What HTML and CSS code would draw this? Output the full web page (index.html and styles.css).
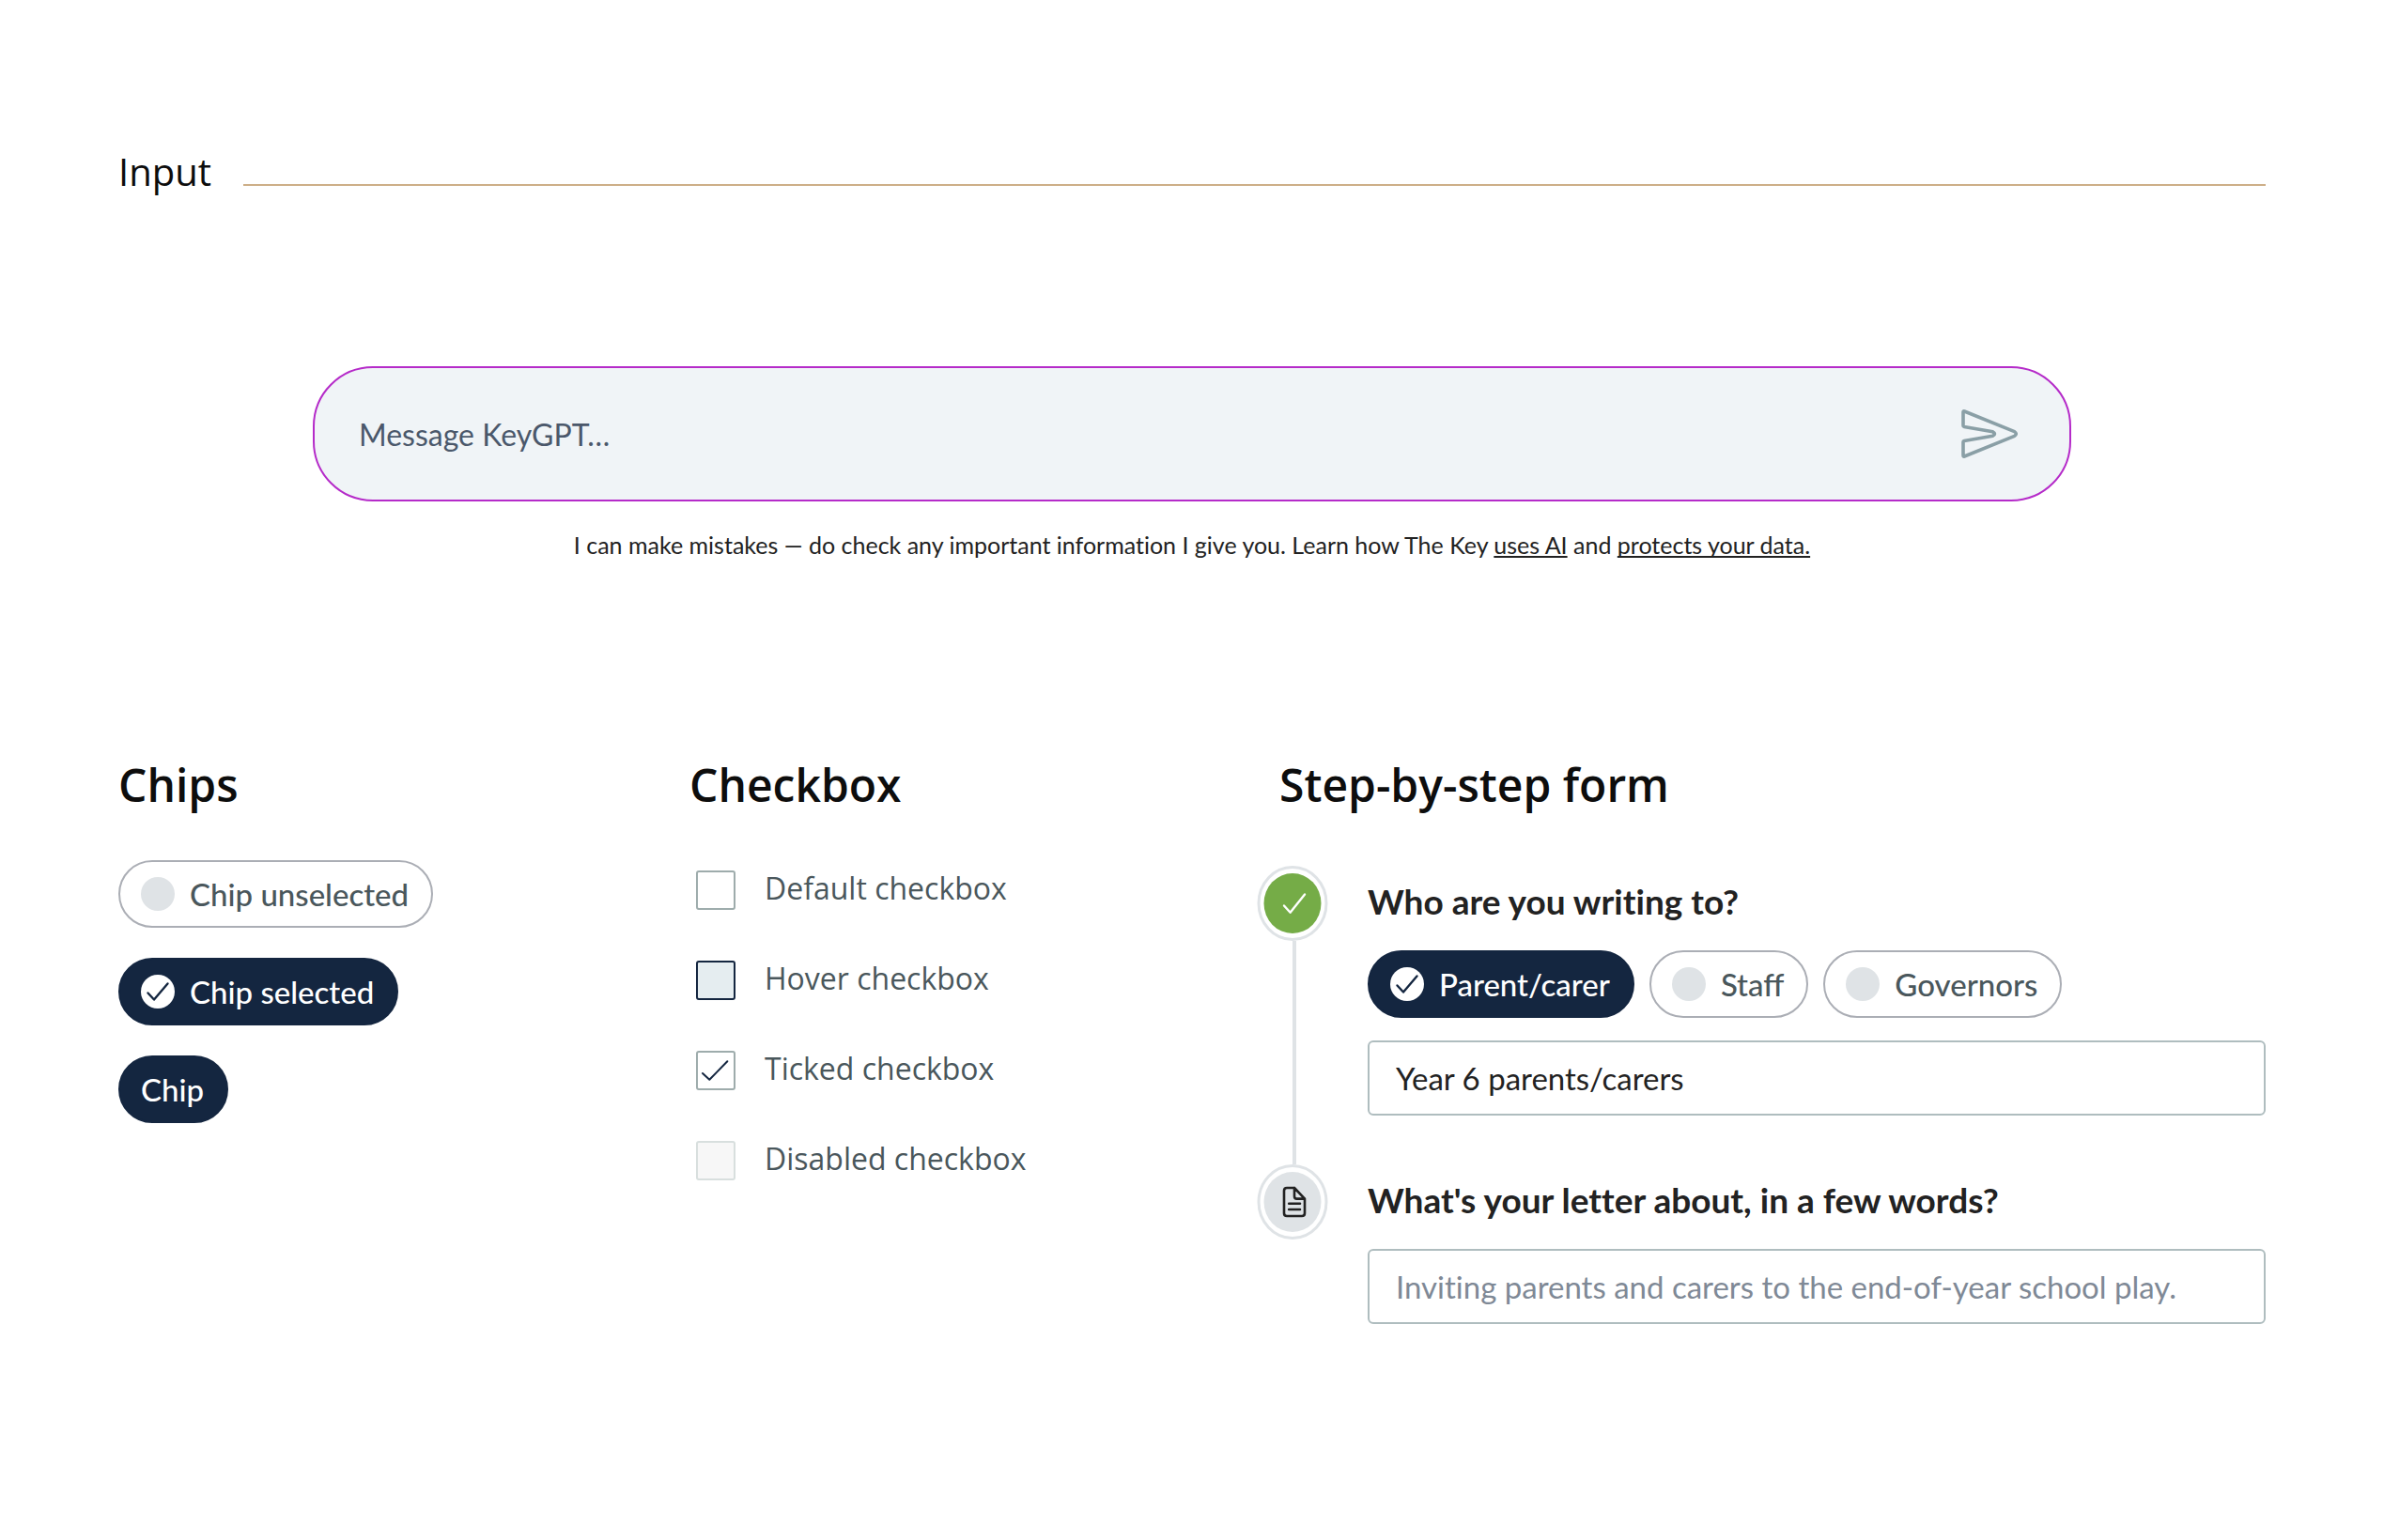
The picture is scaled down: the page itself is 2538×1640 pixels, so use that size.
FILE: index.html
```
<!DOCTYPE html>
<html lang="en">
<head>
  <meta charset="UTF-8" />
  <title>Input</title>
  <link rel="stylesheet" href="styles.css">
</head>
<body>
  <header class="section-header">
    <h1>Input</h1>
    <hr class="rule">
  </header>

  <form class="composer">
    <input type="text" class="composer-input" placeholder="Message KeyGPT…" aria-label="Message KeyGPT" />
    <button type="button" class="send-btn" aria-label="Send">
      <svg width="60" height="52" viewBox="0 0 60 52" fill="none" stroke="currentColor" stroke-width="3.6" stroke-linejoin="round">
        <path d="M2 2.9Q2 1.6 3.3 2L56.6 23.6Q60 26 56.6 28.4L3.3 50Q2 50.4 2 49.1V34.8Q2 33.7 3 33.5L33.5 28.2Q37.5 26 33.5 23.8L3 18.5Q2 18.3 2 17.2Z"/>
      </svg>
    </button>
  </form>
  <p class="note">I can make mistakes — do check any important information I give you. Learn how The Key <a href="#">uses AI</a> and <a href="#">protects your data.</a></p>

  <main class="columns">
    <section>
      <h2>Chips</h2>
      <div class="chip-list">
        <button type="button" class="chip" aria-pressed="false"><span class="dot"></span>Chip unselected</button>
        <button type="button" class="chip selected" aria-pressed="true">
          <svg class="dot" viewBox="0 0 36 36"><path d="M7.5 19.5L14 26.5L28.5 9.5"/></svg>Chip selected
        </button>
        <button type="button" class="chip selected">Chip</button>
      </div>
    </section>

    <section>
      <h2>Checkbox</h2>
      <div class="check-list">
        <label class="check"><input type="checkbox" />Default checkbox</label>
        <label class="check hover"><input type="checkbox" />Hover checkbox</label>
        <label class="check"><input type="checkbox" checked />Ticked checkbox
          <svg class="tick" width="42" height="42" viewBox="0 0 42 42"><path d="M7 24L14.3 30.8L33.3 11.2"/></svg>
        </label>
        <label class="check"><input type="checkbox" disabled />Disabled checkbox</label>
      </div>
    </section>

    <section>
      <h2 class="form-heading">Step-by-step form</h2>
      <form class="steps">
        <div class="step">
          <div class="marker">
            <svg width="76" height="80" viewBox="0 0 76 80" fill="none">
              <ellipse cx="38" cy="40" rx="36" ry="38.5" stroke="#dfe3e6" stroke-width="3"/>
              <ellipse cx="38" cy="40" rx="30.5" ry="32" fill="#75ac47"/>
              <path d="M29 42.5L35.6 49.8L51 30.5" stroke="#fff" stroke-width="2.4" stroke-linecap="round" stroke-linejoin="round"/>
            </svg>
          </div>
          <div class="step-body">
            <label class="question" for="audience">Who are you writing to?</label>
            <div class="chip-row">
              <button type="button" class="chip selected" aria-pressed="true">
                <svg class="dot" viewBox="0 0 36 36"><path d="M7.5 19.5L14 26.5L28.5 9.5"/></svg>Parent/carer
              </button>
              <button type="button" class="chip" aria-pressed="false"><span class="dot"></span>Staff</button>
              <button type="button" class="chip" aria-pressed="false"><span class="dot"></span>Governors</button>
            </div>
            <input type="text" id="audience" class="field" value="Year 6 parents/carers" />
          </div>
        </div>

        <div class="step">
          <div class="marker">
            <svg width="76" height="80" viewBox="0 0 76 80" fill="none">
              <ellipse cx="38" cy="40" rx="36" ry="38.5" stroke="#dfe3e6" stroke-width="3"/>
              <ellipse cx="38" cy="40" rx="30.5" ry="32" fill="#dfe3e6"/>
              <path d="M40 25H32Q29 25 29 28V52Q29 55 32 55H48Q51 55 51 52V36.6L40 25V34Q40 36.6 42.5 36.6H51M34.2 41.8H46M34.2 48H46" stroke="#222" stroke-width="2.6" stroke-linecap="round" stroke-linejoin="round"/>
            </svg>
          </div>
          <div class="step-body">
            <label class="question" for="topic">What's your letter about, in a few words?</label>
            <input type="text" id="topic" class="field" placeholder="Inviting parents and carers to the end-of-year school play." />
          </div>
        </div>
      </form>
    </section>
  </main>
</body>
</html>
```
FILE: styles.css
```
* {
  box-sizing: border-box;
}

body {
  margin: 0;
  padding: 155px 126px;
  font-family: Lato, sans-serif;
  font-size: 33px;
  font-variant-ligatures: none;
  background: #fff;
  color: #222;
}

h1, h2 {
  margin: 0;
  font-family: "Open Sans", sans-serif;
  color: #0d0d0d;
}

h1 {
  font-size: 40px;
  font-weight: 400;
  line-height: 56px;
}

h2 {
  font-size: 48px;
  font-weight: 600;
  line-height: 64px;
}

.section-header {
  display: flex;
  align-items: flex-end;
  gap: 34px;
}

.rule {
  flex: 1;
  height: 2px;
  margin: 0 0 13px;
  border: none;
  background: #cdae88;
}

/* Message box */
.composer {
  display: flex;
  align-items: center;
  max-width: 1872px;
  height: 144px;
  margin: 179px auto 0;
  padding: 0 55px 0 47px;
  border: 2px solid #b52bc9;
  border-radius: 64px;
  background: #f0f4f7;
}

.composer-input {
  flex: 1;
  min-width: 0;
  padding: 0;
  border: none;
  outline: none;
  background: transparent;
  font: 400 32px Lato, sans-serif;
  color: #222;
}

.composer-input::placeholder {
  color: #4b586b;
  opacity: 1;
}

.send-btn {
  display: flex;
  padding: 0;
  border: none;
  background: transparent;
  color: #8a9fa6;
  cursor: pointer;
}

.note {
  margin: 28px 0 0;
  text-align: center;
  font-size: 25px;
  line-height: 36px;
}

.note a {
  color: inherit;
  text-decoration-thickness: 2px;
  text-underline-offset: 2px;
  text-decoration-skip-ink: none;
}

.columns {
  display: grid;
  grid-template-columns: 608px 604px 1fr;
  margin-top: 206px;
}

/* Chips */
.chip-list {
  display: flex;
  flex-direction: column;
  align-items: flex-start;
  gap: 32px;
  margin-top: 48px;
}

.chip-row {
  display: flex;
  flex-wrap: wrap;
  gap: 16px;
  margin-bottom: 24px;
}

.chip {
  display: flex;
  align-items: center;
  gap: 16px;
  height: 72px;
  padding: 0 24px 0 22px;
  border: 2px solid #abaeb5;
  border-radius: 36px;
  background: #fff;
  font: 500 33px Lato, sans-serif;
  color: #4a575c;
  cursor: pointer;
}

.chip.selected {
  border-color: #142640;
  background: #142640;
  color: #fff;
}

.dot {
  width: 36px;
  height: 36px;
  border-radius: 50%;
  background: #dfe3e6;
}

.selected .dot {
  background: #fff;
  fill: none;
  stroke: #142640;
  stroke-width: 2.4;
  stroke-linecap: round;
  stroke-linejoin: round;
}

/* Checkboxes */
.check-list {
  display: flex;
  flex-direction: column;
  gap: 54px;
  margin-top: 59px;
  padding-left: 7px;
}

.check {
  position: relative;
  display: flex;
  align-items: flex-start;
  gap: 31px;
  height: 42px;
  font-family: "Open Sans", sans-serif;
  font-size: 32px;
  line-height: 38px;
  color: #4a575c;
}

.check input {
  appearance: none;
  width: 42px;
  height: 42px;
  margin: 0;
  border: 2px solid #9eacac;
  border-radius: 3px;
  background: #fff;
}

.check.hover input {
  border-color: #142640;
  background: #e5edf0;
}

.check input:disabled {
  border-color: #d8dfde;
  background: #f7f7f7;
}

.tick {
  position: absolute;
  top: 0;
  left: 0;
  fill: none;
  stroke: #142640;
  stroke-width: 2;
  stroke-linecap: round;
  stroke-linejoin: round;
  pointer-events: none;
}

/* Step-by-step form */
.form-heading {
  padding-left: 24px;
}

.steps {
  margin-top: 54px;
}

.step {
  display: grid;
  grid-template-columns: 76px 1fr;
  gap: 42px;
}

.marker {
  display: flex;
  flex-direction: column;
}

.step:not(:last-child) .marker::after {
  content: "";
  flex: 1;
  width: 4px;
  margin-left: 38px;
  background: #dfe3e6;
}

.step-body {
  padding: 16px 0 52px;
}

.question {
  display: block;
  margin-bottom: 30px;
  font-size: 37px;
  font-weight: 700;
  line-height: 44px;
}

.field {
  display: block;
  width: 100%;
  height: 80px;
  padding: 0 28px;
  border: 2px solid #afbdbf;
  border-radius: 6px;
  outline: none;
  background: #fff;
  font: 400 33px Lato, sans-serif;
  font-variant-ligatures: none;
  color: #222;
}

.field::placeholder {
  color: #7f8996;
  opacity: 1;
}
```
